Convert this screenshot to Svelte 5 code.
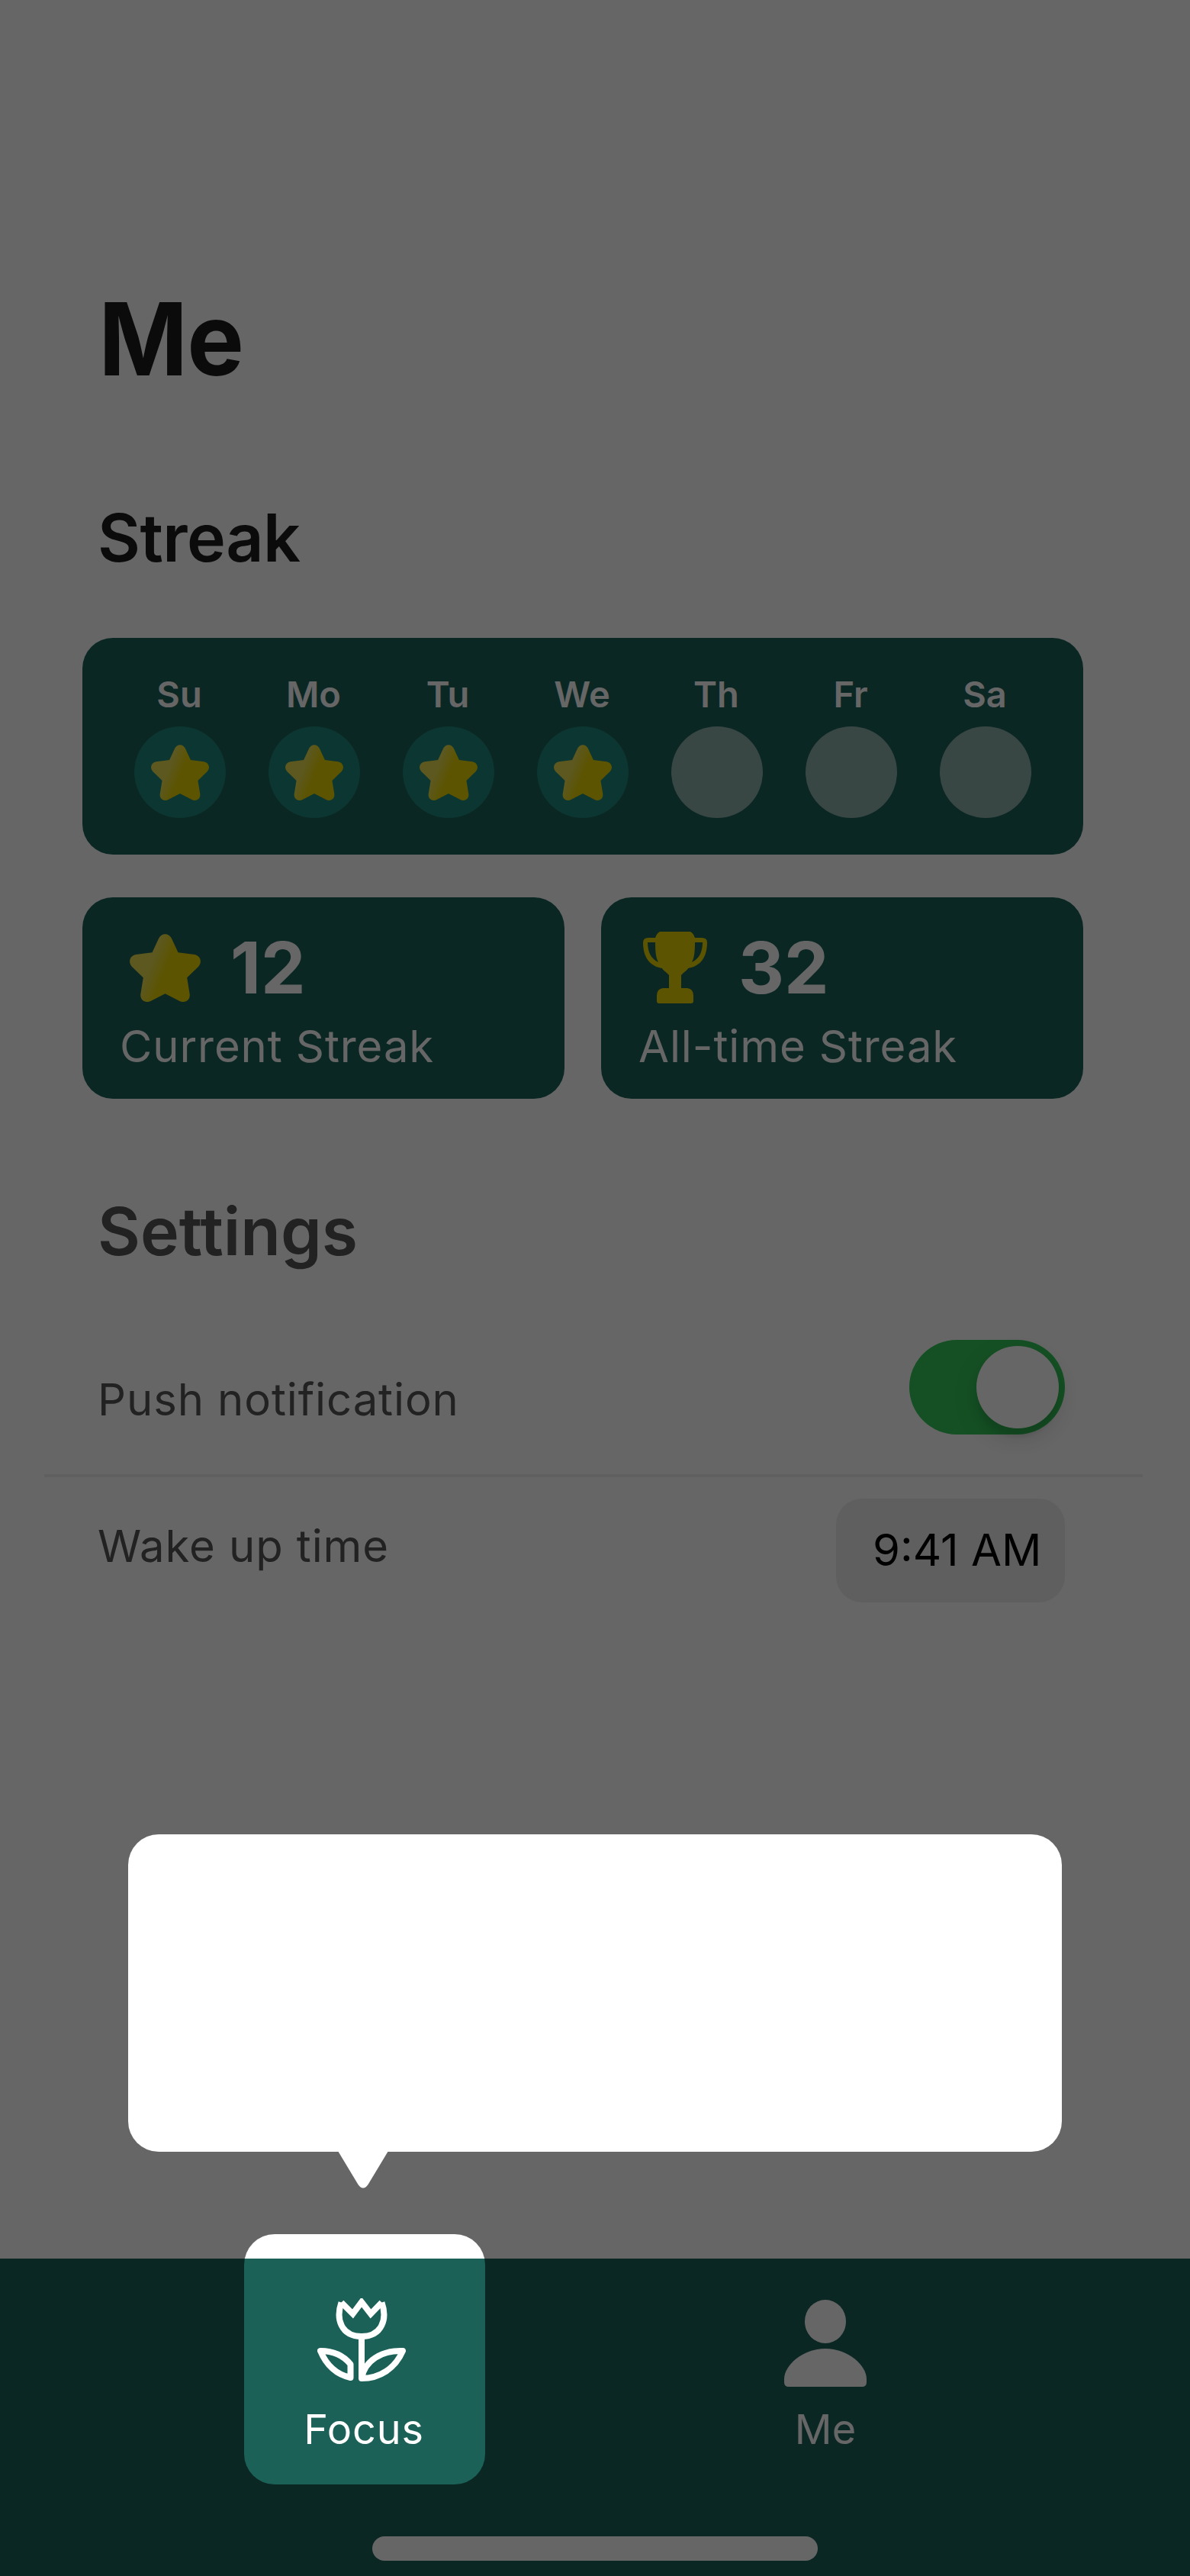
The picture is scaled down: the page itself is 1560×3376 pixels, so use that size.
<script lang="ts">
  const days = [
    { name: 'Su', done: true },
    { name: 'Mo', done: true },
    { name: 'Tu', done: true },
    { name: 'We', done: true },
    { name: 'Th', done: false },
    { name: 'Fr', done: false },
    { name: 'Sa', done: false },
  ];
</script>

{#snippet star()}
  <svg class="star" viewBox="0 0 93 89" aria-hidden="true">
    <defs>
      <linearGradient id="gold" gradientUnits="userSpaceOnUse" x1="16" y1="22" x2="62" y2="40">
        <stop offset="0.35" stop-color="#e6dc50" />
        <stop offset="0.8" stop-color="#e6d200" />
      </linearGradient>
    </defs>
    <path
      fill="url(#gold)"
      d="M38 6C41.500 -1.800 51.500 -1.800 55 6L63.500 24.200L85 27C92.800 28.500 95.500 37 90 43L75.200 57.200L78.700 79C79.500 86.500 72.500 91.200 65.500 88L46.500 78.200L27.500 88C20.500 91.200 13.500 86.500 14.300 79L17.800 57.200L3 43C-2.500 37 .200 28.500 8 27L29.500 24.200Z"
    />
  </svg>
{/snippet}

<div class="screen">
  <main>
    <h1>Me</h1>
    <h2 class="streak-title">Streak</h2>

    <section class="card week">
      {#each days as day}
        <div class="day">
          <span>{day.name}</span>
          <div class="dot" class:done={day.done}>
            {#if day.done}{@render star()}{/if}
          </div>
        </div>
      {/each}
    </section>

    <section class="stats">
      <div class="card stat">
        <div class="figure">
          <div class="badge">{@render star()}</div>
          <strong>12</strong>
        </div>
        <span class="caption">Current Streak</span>
      </div>
      <div class="card stat alltime">
        <div class="figure">
          <div class="badge">
            <svg class="trophy" viewBox="0 0 84 94" aria-hidden="true">
              <path
                fill="#e6d200"
                fill-rule="evenodd"
                d="M22 0H62Q66 2 68 8H77Q84 8 84 14C84 33 76 45 59 48C57 52 53 53 50 57V74H58Q66 75 66 84V91Q66 94 63 94H21Q18 94 18 91V84Q18 75 26 74H34V57C31 53 27 52 25 48C8 45 0 33 0 14Q0 8 7 8H16Q18 2 22 0ZM6 14C6 27 11 36 20 40C17 34 16 28 16 14ZM78 14H68C68 28 67 34 64 40C73 36 78 27 78 14Z"
              />
            </svg>
          </div>
          <strong>32</strong>
        </div>
        <span class="caption">All-time Streak</span>
      </div>
    </section>

    <h2 class="settings-title">Settings</h2>
    <div class="row push">
      <span>Push notification</span>
      <div class="toggle"><div class="knob"></div></div>
    </div>
    <div class="row wake">
      <span>Wake up time</span>
      <div class="time">9:41 AM</div>
    </div>
  </main>

  <nav>
    <div class="tab focus">
      <svg class="tulip" viewBox="0 0 116 110" aria-hidden="true">
        <g fill="none" stroke="#fff" stroke-width="8" stroke-linejoin="round">
          <path d="M31.500 5.500C24 27 31 50 58 50S92 27 84.500 5.500" />
          <path d="M31.500 5.500L46.500 20.500L58 5L70 20.500L84.500 5.500" stroke-linejoin="miter" />
          <path d="M58 50V105" />
          <path d="M58 105C62 82 84 68 112 69C102 92 82 105 58 105Z" />
          <path d="M4 69C22 69 35 76 43.500 86.500V104C25 100 12 88 4 69Z" />
        </g>
      </svg>
      <span>Focus</span>
    </div>
    <div class="tab me">
      <svg class="person" viewBox="0 0 108 114" aria-hidden="true">
        <ellipse cx="54" cy="28.500" rx="27" ry="28.500" fill="#fff" />
        <path d="M0 104C0 86 24 64 54 64S108 86 108 104V108Q108 114 102 114H6Q0 114 0 108Z" fill="#fff" />
      </svg>
      <span>Me</span>
    </div>
    <div class="home"></div>
  </nav>

  <div class="spotlight"></div>
  <div class="tooltip">
    <svg class="arrow" viewBox="0 0 66 49" aria-hidden="true">
      <path d="M0 0H66L39.500 44Q33 53 26.500 44Z" fill="#fff" />
    </svg>
  </div>
</div>

<style>
  .screen {
    position: relative;
    display: flex;
    flex-direction: column;
    box-sizing: border-box;
    width: 1560px;
    height: 3376px;
    overflow: hidden;
    background: #fff;
    color: #1c1c1c;
    font-family: Inter, 'Liberation Sans', sans-serif;
  }

  main {
    flex: 1;
    padding: 384px 140px 0 108px;
  }

  h1,
  h2 {
    margin: 0;
    padding-left: 20px;
  }

  h1 {
    padding-left: 21px;
    font-size: 132px;
    line-height: 120px;
    font-weight: 700;
    letter-spacing: -1px;
    transform: scaleX(0.95);
    transform-origin: 28px 50%;
  }

  h2 {
    font-size: 86px;
    line-height: 100px;
    font-weight: 600;
  }

  .streak-title {
    margin-top: 151px;
    letter-spacing: -0.5px;
  }

  .card {
    box-sizing: border-box;
    border-radius: 40px;
    background: #1b6157;
    color: #fff;
  }

  .week {
    display: flex;
    justify-content: space-between;
    height: 284px;
    margin-top: 81px;
    padding: 44px 68px 0;
  }

  .day {
    display: flex;
    flex-direction: column;
    align-items: center;
    width: 120px;
    font-size: 47px;
    line-height: 60px;
    font-weight: 600;
  }

  .day span {
    margin-right: 2px;
  }

  .dot {
    display: flex;
    align-items: center;
    justify-content: center;
    width: 120px;
    height: 120px;
    margin-top: 12px;
    border-radius: 50%;
    background: rgba(255, 255, 255, 0.5);
  }

  .dot.done {
    background: #20877b;
  }

  .dot .star {
    width: 76px;
    height: 73px;
  }

  .stats {
    display: flex;
    gap: 48px;
    margin-top: 56px;
  }

  .stat {
    flex: 1;
    height: 264px;
    padding: 36px 49px 0;
  }

  .figure {
    display: flex;
    align-items: center;
    gap: 27px;
    height: 112px;
  }

  .badge {
    display: flex;
    align-items: center;
    justify-content: center;
    width: 118px;
    height: 112px;
  }

  .badge .star {
    width: 93px;
    height: 89px;
  }

  .alltime .badge {
    width: 96px;
    margin-right: 8px;
  }

  .trophy {
    width: 84px;
    height: 94px;
  }

  strong {
    font-size: 93px;
    line-height: 112px;
    font-weight: 700;
  }

  .caption {
    display: block;
    margin-top: 11px;
    font-size: 58px;
    line-height: 72px;
    letter-spacing: 0.9px;
  }

  .settings-title {
    margin-top: 124px;
    color: #555;
  }

  .row {
    display: flex;
    justify-content: space-between;
    align-items: flex-start;
    box-sizing: border-box;
    color: #555;
    font-size: 58px;
    line-height: 72px;
  }

  .row span {
    letter-spacing: 0.9px;
  }

  .push {
    width: 1440px;
    height: 244px;
    margin: 28px 0 0 -50px;
    padding: 64px 102px 0 70px;
    border-bottom: 4px solid #f0f0f0;
  }

  .push span {
    margin-top: 42px;
  }

  .wake {
    width: 1440px;
    margin-left: -50px;
    padding: 28px 102px 0 70px;
  }

  .wake span {
    margin-top: 26px;
  }

  .toggle {
    display: flex;
    justify-content: flex-end;
    box-sizing: border-box;
    width: 204px;
    height: 124px;
    padding: 8px;
    border-radius: 62px;
    background: #34c759;
  }

  .knob {
    width: 108px;
    height: 108px;
    border-radius: 50%;
    background: #fff;
    box-shadow: 0 12px 32px rgba(0, 0, 0, 0.15), 0 12px 4px rgba(0, 0, 0, 0.06);
  }

  .time {
    box-sizing: border-box;
    width: 300px;
    height: 136px;
    padding-left: 48px;
    border-radius: 34px;
    background: rgba(118, 118, 128, 0.12);
    color: #000;
    line-height: 134px;
    white-space: nowrap;
  }

  nav {
    display: grid;
    grid-template-columns: 316px 316px;
    column-gap: 288px;
    grid-template-rows: 364px 32px;
    height: 416px;
    padding-left: 320px;
    background: #1b6157;
    color: #fff;
  }

  .tab {
    display: flex;
    flex-direction: column;
    align-items: center;
    font-size: 54px;
    line-height: 68px;
  }

  .tulip {
    width: 116px;
    height: 110px;
    margin: 52px 8px 0 0;
  }

  .focus span {
    margin: 28px 2px 0 0;
    letter-spacing: 0.8px;
  }

  .person {
    width: 108px;
    height: 114px;
    margin-top: 54px;
  }

  .me span {
    margin-top: 22px;
  }

  .home {
    grid-column: 1 / -1;
    width: 584px;
    height: 32px;
    margin-left: 168px;
    border-radius: 16px;
    background: #fff;
  }

  /* Everything outside the highlighted tab is dimmed by the spread shadow. */
  .spotlight {
    position: absolute;
    left: 320px;
    top: 2928px;
    width: 316px;
    height: 328px;
    border-radius: 40px;
    box-shadow: 0 0 0 4000px rgba(0, 0, 0, 0.6);
  }

  .tooltip {
    position: absolute;
    left: 168px;
    top: 2404px;
    width: 1224px;
    height: 416px;
    border-radius: 40px;
    background: #fff;
  }

  .arrow {
    position: absolute;
    left: 275px;
    top: 415px;
    width: 66px;
    height: 49px;
  }
</style>
